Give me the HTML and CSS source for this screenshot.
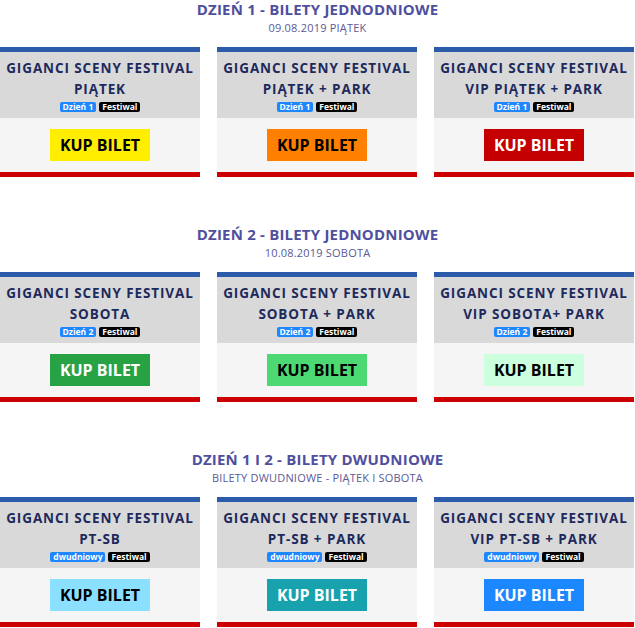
FILE: index.html
```html
<!DOCTYPE html>
<html lang="pl">
<head>
  <meta charset="UTF-8"/>
  <meta name="viewport" content="width=device-width,initial-scale=1.0"/>
  <title>Bilety - Giganci Sceny Festival</title>
  <link rel="stylesheet" href="styles.css">
</head>
<body>
<div class="page">

  <section class="day">
    <header class="day-head">
      <h2>DZIEŃ 1 - BILETY JEDNODNIOWE</h2>
      <p>09.08.2019 PIĄTEK</p>
    </header>
    <div class="tickets">
      <div class="ticket">
        <div class="ticket-top">
          <h3>GIGANCI SCENY FESTIVAL<br>PIĄTEK</h3>
          <div class="tags"><span class="tag tag-day">Dzień 1</span><span class="tag tag-fest">Festiwal</span></div>
        </div>
        <div class="ticket-body"><a class="buy buy-yellow" href="#">KUP BILET</a></div>
      </div>
      <div class="ticket">
        <div class="ticket-top">
          <h3>GIGANCI SCENY FESTIVAL<br>PIĄTEK + PARK</h3>
          <div class="tags"><span class="tag tag-day">Dzień 1</span><span class="tag tag-fest">Festiwal</span></div>
        </div>
        <div class="ticket-body"><a class="buy buy-orange" href="#">KUP BILET</a></div>
      </div>
      <div class="ticket">
        <div class="ticket-top">
          <h3>GIGANCI SCENY FESTIVAL<br>VIP PIĄTEK + PARK</h3>
          <div class="tags"><span class="tag tag-day">Dzień 1</span><span class="tag tag-fest">Festiwal</span></div>
        </div>
        <div class="ticket-body"><a class="buy buy-red" href="#">KUP BILET</a></div>
      </div>
    </div>
  </section>

  <section class="day">
    <header class="day-head">
      <h2>DZIEŃ 2 - BILETY JEDNODNIOWE</h2>
      <p>10.08.2019 SOBOTA</p>
    </header>
    <div class="tickets">
      <div class="ticket">
        <div class="ticket-top">
          <h3>GIGANCI SCENY FESTIVAL<br>SOBOTA</h3>
          <div class="tags"><span class="tag tag-day">Dzień 2</span><span class="tag tag-fest">Festiwal</span></div>
        </div>
        <div class="ticket-body"><a class="buy buy-green" href="#">KUP BILET</a></div>
      </div>
      <div class="ticket">
        <div class="ticket-top">
          <h3>GIGANCI SCENY FESTIVAL<br>SOBOTA + PARK</h3>
          <div class="tags"><span class="tag tag-day">Dzień 2</span><span class="tag tag-fest">Festiwal</span></div>
        </div>
        <div class="ticket-body"><a class="buy buy-lime" href="#">KUP BILET</a></div>
      </div>
      <div class="ticket">
        <div class="ticket-top">
          <h3>GIGANCI SCENY FESTIVAL<br>VIP SOBOTA+ PARK</h3>
          <div class="tags"><span class="tag tag-day">Dzień 2</span><span class="tag tag-fest">Festiwal</span></div>
        </div>
        <div class="ticket-body"><a class="buy buy-mint" href="#">KUP BILET</a></div>
      </div>
    </div>
  </section>

  <section class="day">
    <header class="day-head">
      <h2>DZIEŃ 1 I 2 - BILETY DWUDNIOWE</h2>
      <p>BILETY DWUDNIOWE - PIĄTEK I SOBOTA</p>
    </header>
    <div class="tickets">
      <div class="ticket">
        <div class="ticket-top">
          <h3>GIGANCI SCENY FESTIVAL<br>PT-SB</h3>
          <div class="tags"><span class="tag tag-day">dwudniowy</span><span class="tag tag-fest">Festiwal</span></div>
        </div>
        <div class="ticket-body"><a class="buy buy-sky" href="#">KUP BILET</a></div>
      </div>
      <div class="ticket">
        <div class="ticket-top">
          <h3>GIGANCI SCENY FESTIVAL<br>PT-SB + PARK</h3>
          <div class="tags"><span class="tag tag-day">dwudniowy</span><span class="tag tag-fest">Festiwal</span></div>
        </div>
        <div class="ticket-body"><a class="buy buy-teal" href="#">KUP BILET</a></div>
      </div>
      <div class="ticket">
        <div class="ticket-top">
          <h3>GIGANCI SCENY FESTIVAL<br>VIP PT-SB + PARK</h3>
          <div class="tags"><span class="tag tag-day">dwudniowy</span><span class="tag tag-fest">Festiwal</span></div>
        </div>
        <div class="ticket-body"><a class="buy buy-blue" href="#">KUP BILET</a></div>
      </div>
    </div>
  </section>

</div>
</body>
</html>
```

FILE: styles.css
```css
/* page + day sections */
:root{--head:#4f4f9e;--navy:#1d2a5c;--bar-blue:#2b5ba9;--bar-red:#cc0000;--top-gray:#d9d9d9;--body-gray:#f5f5f5}
*{box-sizing:border-box}
body{margin:0;background:#fff;font-family:'Open Sans',sans-serif}
.page{width:635px;display:flex;flex-direction:column;gap:48px}
.day-head{text-align:center;padding-top:1px}
.day-head h2{margin:0;font-size:15px;line-height:17px;font-weight:700;color:var(--head);letter-spacing:.2px}
.day-head p{margin:3px 0 0;font-size:11px;line-height:13px;font-weight:400;color:#5a5a96;letter-spacing:.2px}

/* ticket cards */
.tickets{display:grid;grid-template-columns:200px 200px 200px;column-gap:17px;margin-top:13px}
.ticket{border-top:5px solid var(--bar-blue);border-bottom:5px solid var(--bar-red)}
.ticket-top{background:var(--top-gray);height:66px;text-align:center;padding-top:6px}
.ticket-top h3{margin:0;font-size:13.5px;line-height:21px;font-weight:700;color:var(--navy);letter-spacing:.9px}
.tags{display:flex;justify-content:center;gap:3px;margin-top:2px}
.tag{font-size:8.5px;line-height:10px;font-weight:700;color:#fff;padding:0 3px;border-radius:2px}
.tag-day{background:#1e86ff}
.tag-fest{background:#000}
.ticket-body{background:var(--body-gray);height:54px;display:flex;justify-content:center;align-items:center}

/* buy buttons */
.buy{display:flex;align-items:center;justify-content:center;width:100px;height:32px;font-size:16px;font-weight:700;color:#000;text-decoration:none}
.buy-yellow{background:#ffee00}
.buy-orange{background:#ff8000}
.buy-red{background:#c40000;color:#fff}
.buy-green{background:#27a346;color:#fff}
.buy-lime{background:#4cd873}
.buy-mint{background:#ccffdd}
.buy-sky{background:#8be0ff}
.buy-teal{background:#18a2ae;color:#fff}
.buy-blue{background:#1b88ff;color:#fff}
```
